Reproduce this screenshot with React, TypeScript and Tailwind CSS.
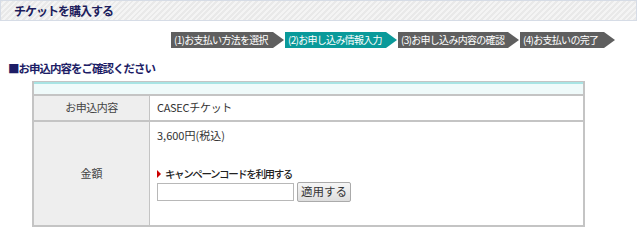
const font = { fontFamily: '"Noto Sans CJK JP", "Liberation Sans", sans-serif' };

const steps = [
  { label: "(1)お支払い方法を選択", w: "w-[113px]", active: false },
  { label: "(2)お申し込み情報入力", w: "w-[112px]", active: true },
  { label: "(3)お申し込み内容の確認", w: "w-[121px]", active: false },
  { label: "(4)お支払いの完了", w: "w-[95px]", active: false },
];

export default function App() {
  return (
    <div className="h-[229px] w-[640px] overflow-hidden bg-white text-[#333]" style={font}>
      {/* page header */}
      <div className="mr-[3px] flex h-[21px] items-center border border-[#d6dce6] bg-[repeating-linear-gradient(135deg,#e9e9e9_0px,#e9e9e9_2px,#f4f4f4_2px,#f4f4f4_4px)] pl-[13px]">
        <h1 className="text-[12px] leading-none font-bold tracking-[-1px] text-[#1d1d5c]">チケットを購入する</h1>
      </div>

      {/* steps */}
      <div className="mt-[11px] flex justify-end gap-[1px] pr-[25px]">
        {steps.map((s) => (
          <div
            key={s.label}
            className={`${s.w} flex h-[16px] items-center pl-[3px] text-[10px] leading-none tracking-[-0.7px] whitespace-nowrap text-white [clip-path:polygon(0_0,calc(100%-11px)_0,100%_50%,calc(100%-11px)_100%,0_100%)] ${
              s.active ? "bg-[#0a9a9a]" : "bg-[#5f5f5f]"
            }`}
          >
            {s.label}
          </div>
        ))}
      </div>

      {/* section title */}
      <h2 className="mt-[15px] ml-[8px] text-[11.5px] leading-none font-bold tracking-[-1px] text-[#1d1d66]">
        ■お申込内容をご確認ください
      </h2>

      {/* confirm table */}
      <div className="mt-[6px] ml-[32px] w-[553px] border-2 border-t border-[#c4c4c4]">
        <div className="h-[14px] border-t-2 border-b-2 border-t-[#a8e4e4] border-b-[#c4c4c4] bg-[#effafa]" />
        <div className="flex h-[26px] border-b-2 border-[#c4c4c4] text-[11px]">
          <div className="flex w-[116px] items-center justify-center border-r border-[#c4c4c4] bg-[#eeeeee] tracking-[-0.5px] text-[#444]">
            お申込内容
          </div>
          <div className="flex items-center pl-[7px] tracking-[-0.3px] text-[#333]">CASECチケット</div>
        </div>
        <div className="flex h-[103px] text-[11px]">
          <div className="flex w-[116px] items-center justify-center border-r border-[#c4c4c4] bg-[#eeeeee] text-[#444]">
            金額
          </div>
          <div className="flex flex-col pt-[8px] pl-[7px] text-[#333]">
            <span className="leading-none">3,600円(税込)</span>
            <div className="mt-[28px] flex items-center gap-[4px] leading-none">
              <span className="h-0 w-0 border-y-[4px] border-l-[4px] border-y-transparent border-l-[#cc0000]" />
              <span className="text-[10.5px] font-medium tracking-[-1.4px] text-[#222]">キャンペーンコードを利用する</span>
            </div>
            <div className="mt-[3px] flex items-center gap-[3px]">
              <input className="h-[18px] w-[137px] border border-[#b8b8b8] bg-white" />
              <button className="h-[20px] w-[54px] rounded-[2px] border border-[#aaa] bg-[linear-gradient(#f6f6f6,#dedede)] text-[11.5px] text-[#333]">
                適用する
              </button>
            </div>
          </div>
        </div>
      </div>
    </div>
  );
}
